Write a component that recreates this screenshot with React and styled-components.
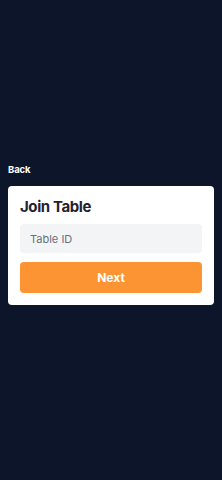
import React from "react";
import styled, { createGlobalStyle } from "styled-components";

const Global = createGlobalStyle`
  html, body { margin: 0; padding: 0; background: #0c152a; }
  body { font-family: Inter, "Noto Sans", sans-serif; }
  * { box-sizing: border-box; }
`;

const Page = styled.div`
  min-height: 100vh;
  display: flex;
  flex-direction: column;
  justify-content: center;
  padding: 0 8px 12px;
  gap: 10px;
`;

const BackLink = styled.button`
  align-self: flex-start;
  background: none;
  border: none;
  padding: 0;
  color: #ffffff;
  font-family: inherit;
  font-weight: 700;
  font-size: 9.5px;
  line-height: 13px;
  letter-spacing: -0.1px;
`;

const Card = styled.div`
  background: #ffffff;
  border-radius: 4px;
  padding: 12px;
  display: flex;
  flex-direction: column;
  gap: 9px;
`;

const Title = styled.h1`
  margin: 0;
  color: #1f2330;
  font-size: 15px;
  font-weight: 700;
  line-height: 17px;
  letter-spacing: -0.4px;
`;

const Input = styled.input`
  height: 29px;
  border: none;
  border-radius: 4px;
  background: #f3f4f6;
  padding: 0 10px;
  font-family: inherit;
  font-size: 11px;
  color: #1f2330;
  outline: none;
  &::placeholder { color: #6b6f7b; }
`;

const Button = styled.button`
  height: 31px;
  border: none;
  border-radius: 4px;
  background: #fd9434;
  color: #ffffff;
  font-family: inherit;
  font-weight: 700;
  font-size: 12px;
`;

export default function App() {
  return (
    <>
      <Global />
      <Page>
        <BackLink>Back</BackLink>
        <Card>
          <Title>Join Table</Title>
          <Input placeholder="Table ID" />
          <Button>Next</Button>
        </Card>
      </Page>
    </>
  );
}
